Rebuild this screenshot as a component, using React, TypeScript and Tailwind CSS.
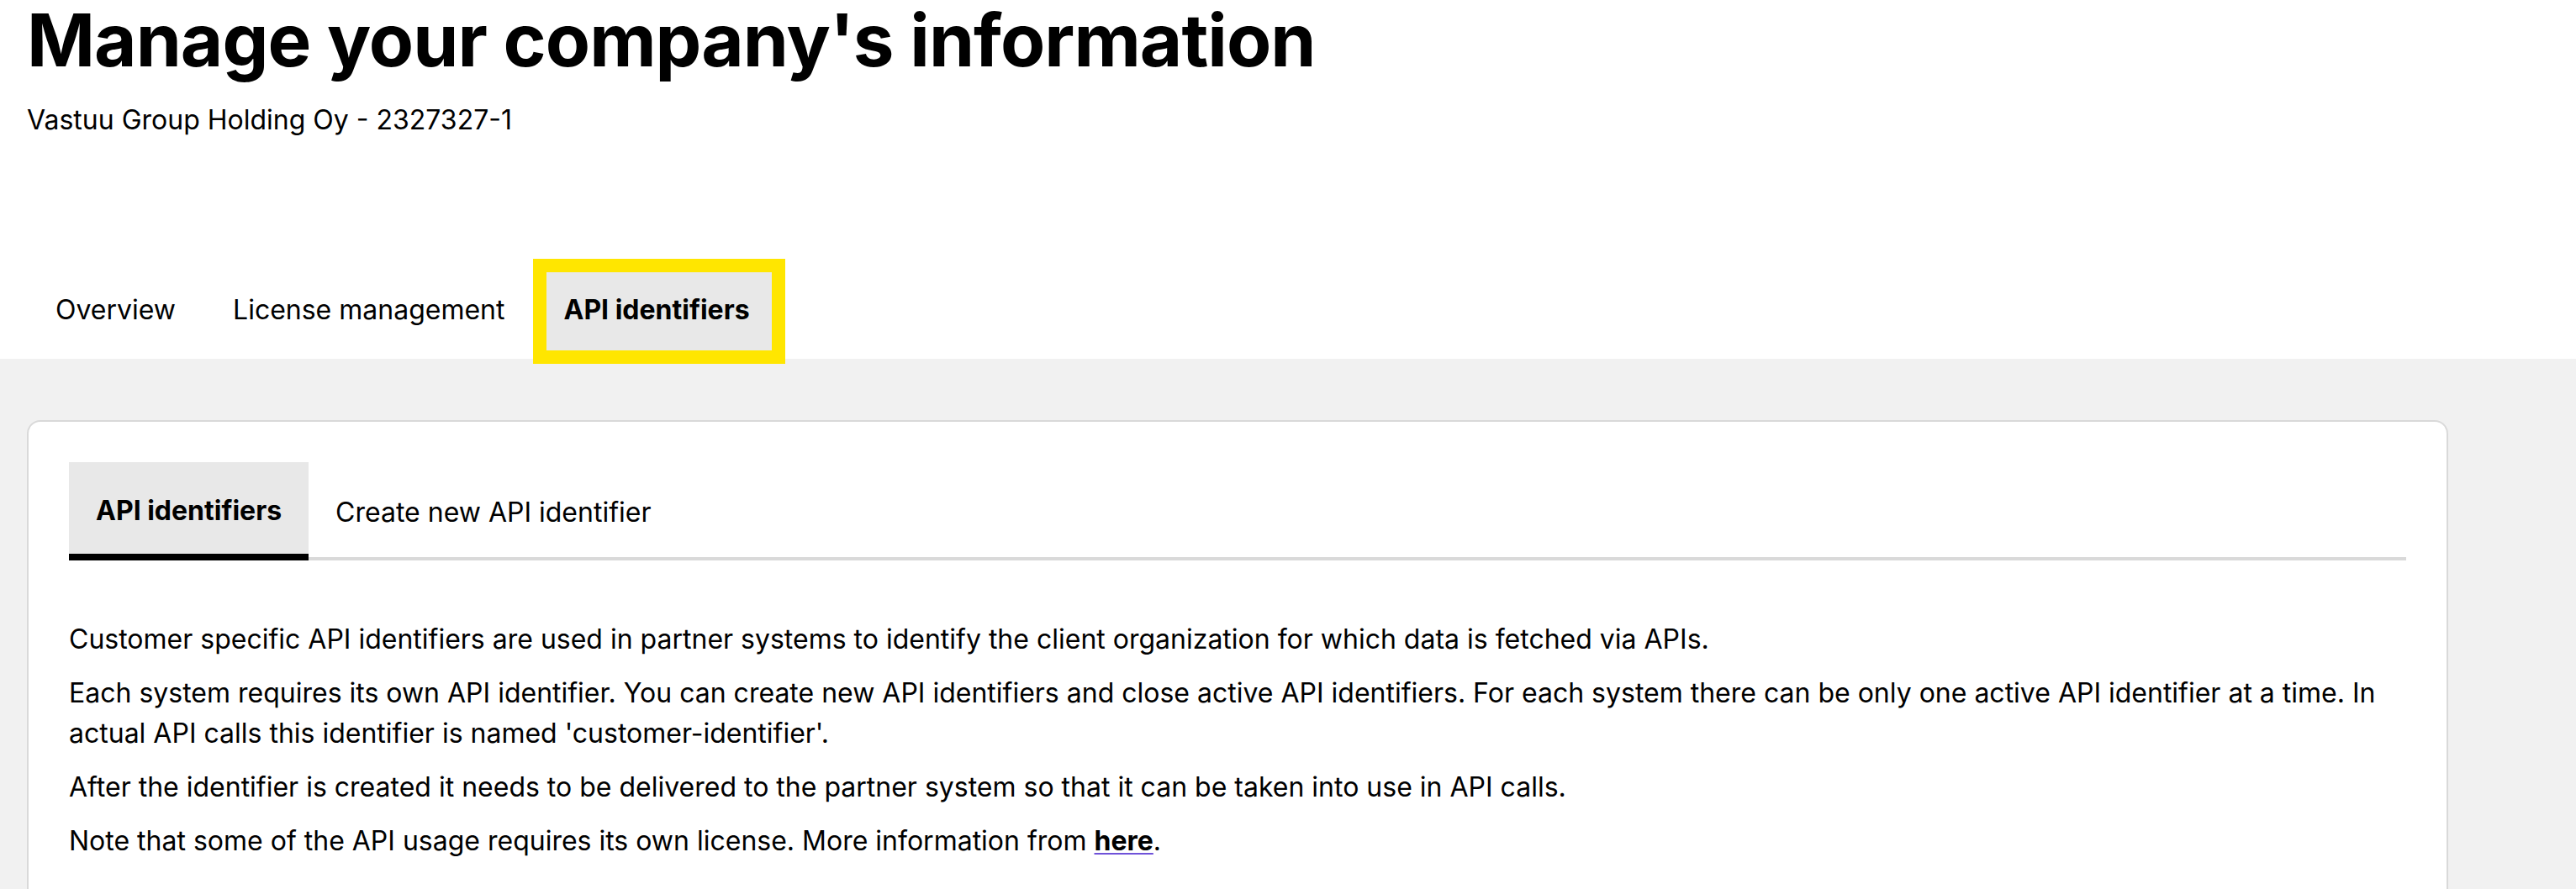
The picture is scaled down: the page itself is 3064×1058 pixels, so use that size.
import React from "react";

export default function App() {
  return (
    <div className="min-h-screen bg-[#f1f1f1] text-black" style={{ fontFamily: "Inter, 'Noto Sans', sans-serif" }}>
      <header className="bg-white">
        <div className="pl-8">
          <h1 className="text-[87px] leading-[96px] font-bold tracking-[-0.011em]">Manage your company's information</h1>
          <p className="mt-[23px] text-[32px] leading-[48px]">Vastuu Group Holding Oy - 2327327-1</p>
        </div>
        <nav className="mt-[141px] flex items-end pl-8 text-[32px] leading-[48px]">
          <button className="px-[34px] pt-[37px] pb-[34px]">Overview</button>
          <button className="px-[34px] pt-[37px] pb-[34px]">License management</button>
          <button className="relative z-10 -mb-[6px] w-[300px] bg-[#e8e8e8] pl-[36px] pt-[37px] pb-[40px] text-left font-bold shadow-[inset_0_0_0_16px_#ffe600]">
            API identifiers
          </button>
        </nav>
      </header>
      <main className="pl-8 pt-[73px]">
        <section className="w-[2880px] rounded-2xl border-2 border-[#d9d9d9] bg-white p-12">
          <div className="flex border-b-4 border-[#d9d9d9] text-[32px] leading-[48px]">
            <button className="-mb-[4px] border-b-8 border-black bg-[#e8e8e8] px-8 pt-[34px] pb-[27px] font-bold">API identifiers</button>
            <button className="px-8 pt-[34px] pb-[27px]">Create new API identifier</button>
          </div>
          <div className="mt-[70px] text-[32px] leading-[48px]">
            <p className="mb-4">Customer specific API identifiers are used in partner systems to identify the client organization for which data is fetched via APIs.</p>
            <p className="mb-4">Each system requires its own API identifier. You can create new API identifiers and close active API identifiers. For each system there can be only one active API identifier at a time. In actual API calls this identifier is named 'customer-identifier'.</p>
            <p className="mb-4">After the identifier is created it needs to be delivered to the partner system so that it can be taken into use in API calls.</p>
            <p className="mb-4">
              Note that some of the API usage requires its own license. More information from{" "}
              <a href="#" className="font-bold underline decoration-[#6f52d9] decoration-2 underline-offset-[3px]">here</a>.
            </p>
          </div>
        </section>
      </main>
    </div>
  );
}
